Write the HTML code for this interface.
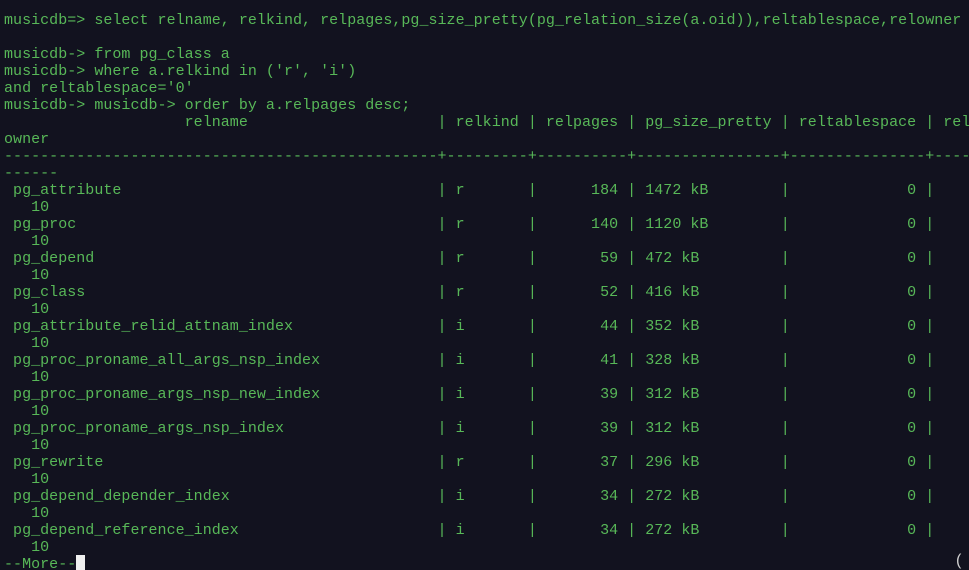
<!DOCTYPE html>
<html><head><meta charset="utf-8"><style>
html,body{margin:0;padding:0;background:#12121f;width:969px;height:570px;overflow:hidden}
pre{margin:0;padding:12px 0 0 4px;font-family:"Liberation Mono",monospace;font-size:15px;line-height:17px;color:#58b858;letter-spacing:0.03px;white-space:pre;position:relative}
.cur{position:absolute;left:76px;top:555px;width:9px;height:15px;background:#f0f0f0}
.p{position:absolute;left:956px;top:552px;color:#cfcfcf;font:16px "Liberation Sans",sans-serif}
</style></head><body>
<pre>musicdb=&gt; select relname, relkind, relpages,pg_size_pretty(pg_relation_size(a.oid)),reltablespace,relowner

musicdb-&gt; from pg_class a
musicdb-&gt; where a.relkind in ('r', 'i')
and reltablespace='0'
musicdb-&gt; musicdb-&gt; order by a.relpages desc;
                    relname                     | relkind | relpages | pg_size_pretty | reltablespace | rel
owner
------------------------------------------------+---------+----------+----------------+---------------+-----
------
 pg_attribute                                   | r       |      184 | 1472 kB        |             0 |    
   10
 pg_proc                                        | r       |      140 | 1120 kB        |             0 |    
   10
 pg_depend                                      | r       |       59 | 472 kB         |             0 |    
   10
 pg_class                                       | r       |       52 | 416 kB         |             0 |    
   10
 pg_attribute_relid_attnam_index                | i       |       44 | 352 kB         |             0 |    
   10
 pg_proc_proname_all_args_nsp_index             | i       |       41 | 328 kB         |             0 |    
   10
 pg_proc_proname_args_nsp_new_index             | i       |       39 | 312 kB         |             0 |    
   10
 pg_proc_proname_args_nsp_index                 | i       |       39 | 312 kB         |             0 |    
   10
 pg_rewrite                                     | r       |       37 | 296 kB         |             0 |    
   10
 pg_depend_depender_index                       | i       |       34 | 272 kB         |             0 |    
   10
 pg_depend_reference_index                      | i       |       34 | 272 kB         |             0 |    
   10
--More--</pre>
<div class="cur"></div>
<div class="p">(</div>
</body></html>
